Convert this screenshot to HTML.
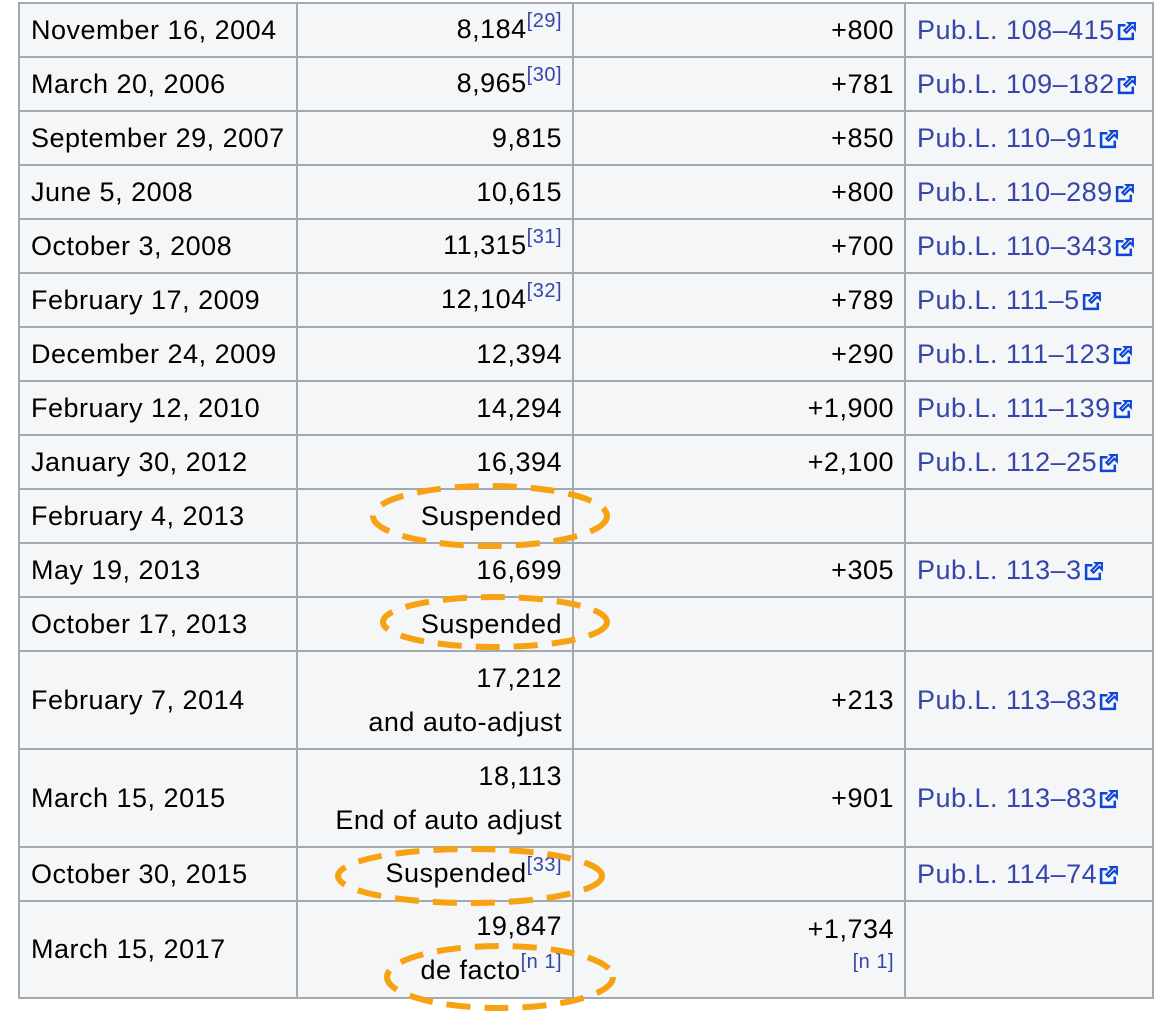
<!DOCTYPE html>
<html><head><meta charset="utf-8"><style>
body{margin:0;width:1168px;height:1018px;background:#fff;position:relative;overflow:hidden;font-family:"Liberation Sans",Arial,sans-serif;font-size:27px;letter-spacing:0.5px;color:#000}
.bg{position:absolute;left:18px;top:2px;width:1136px;height:997px;background:#f5f6f8}
.h{position:absolute;left:18px;width:1136px;height:2px;background:#a2a9b1}
.v{position:absolute;top:2px;height:997px;width:2px;background:#a2a9b1}
.row{position:absolute;left:18px;width:1136px;display:flex;align-items:center;white-space:nowrap}
.c1{width:279px;padding-left:13px;box-sizing:border-box}
.c2{width:276px;text-align:right;padding-right:11px;box-sizing:border-box;line-height:44px}
.c3{width:332px;text-align:right;padding-right:11px;box-sizing:border-box}
.c4{width:249px;padding-left:12px;box-sizing:border-box;color:#3645a8}
sup{font-size:20px;letter-spacing:0.5px;color:#3645a8;vertical-align:0;position:relative;top:-11px}
.ic{display:inline-block;width:20px;height:20px;vertical-align:-2px;margin-left:2px}
.n{font-size:20px;letter-spacing:0.5px;color:#3645a8;line-height:22px}
</style></head><body>
<div class="bg"></div>
<div class="h" style="top:2px"></div><div class="h" style="top:56px"></div><div class="h" style="top:110px"></div><div class="h" style="top:164px"></div><div class="h" style="top:218px"></div><div class="h" style="top:272px"></div><div class="h" style="top:326px"></div><div class="h" style="top:380px"></div><div class="h" style="top:434px"></div><div class="h" style="top:488px"></div><div class="h" style="top:542px"></div><div class="h" style="top:596px"></div><div class="h" style="top:650px"></div><div class="h" style="top:748px"></div><div class="h" style="top:846px"></div><div class="h" style="top:900px"></div><div class="h" style="top:997px"></div>
<div class="v" style="left:18px"></div><div class="v" style="left:296px"></div><div class="v" style="left:572px"></div><div class="v" style="left:904px"></div><div class="v" style="left:1152px"></div>
<svg width="0" height="0" style="position:absolute"><defs><symbol id="e" viewBox="0 0 19 19"><path d="M8 4H2V17H15V11" fill="none" stroke="#1046d8" stroke-width="2.4"/><path d="M11 2H17V8L14.5 5.5L9 11L7 9L12.5 3.5Z" fill="none" stroke="#1046d8" stroke-width="2"/></symbol></defs></svg>

<div class="row" style="top:4px;height:52px"><div class="c1">November 16, 2004</div><div class="c2">8,184<sup>[29]</sup></div><div class="c3">+800</div><div class="c4">Pub.L. 108–415<svg class="ic"><use href="#e"/></svg></div></div>
<div class="row" style="top:58px;height:52px"><div class="c1">March 20, 2006</div><div class="c2">8,965<sup>[30]</sup></div><div class="c3">+781</div><div class="c4">Pub.L. 109–182<svg class="ic"><use href="#e"/></svg></div></div>
<div class="row" style="top:112px;height:52px"><div class="c1">September 29, 2007</div><div class="c2">9,815</div><div class="c3">+850</div><div class="c4">Pub.L. 110–91<svg class="ic"><use href="#e"/></svg></div></div>
<div class="row" style="top:166px;height:52px"><div class="c1">June 5, 2008</div><div class="c2">10,615</div><div class="c3">+800</div><div class="c4">Pub.L. 110–289<svg class="ic"><use href="#e"/></svg></div></div>
<div class="row" style="top:220px;height:52px"><div class="c1">October 3, 2008</div><div class="c2">11,315<sup>[31]</sup></div><div class="c3">+700</div><div class="c4">Pub.L. 110–343<svg class="ic"><use href="#e"/></svg></div></div>
<div class="row" style="top:274px;height:52px"><div class="c1">February 17, 2009</div><div class="c2">12,104<sup>[32]</sup></div><div class="c3">+789</div><div class="c4">Pub.L. 111–5<svg class="ic"><use href="#e"/></svg></div></div>
<div class="row" style="top:328px;height:52px"><div class="c1">December 24, 2009</div><div class="c2">12,394</div><div class="c3">+290</div><div class="c4">Pub.L. 111–123<svg class="ic"><use href="#e"/></svg></div></div>
<div class="row" style="top:382px;height:52px"><div class="c1">February 12, 2010</div><div class="c2">14,294</div><div class="c3">+1,900</div><div class="c4">Pub.L. 111–139<svg class="ic"><use href="#e"/></svg></div></div>
<div class="row" style="top:436px;height:52px"><div class="c1">January 30, 2012</div><div class="c2">16,394</div><div class="c3">+2,100</div><div class="c4">Pub.L. 112–25<svg class="ic"><use href="#e"/></svg></div></div>
<div class="row" style="top:490px;height:52px"><div class="c1">February 4, 2013</div><div class="c2">Suspended</div><div class="c3"></div><div class="c4"></div></div>
<div class="row" style="top:544px;height:52px"><div class="c1">May 19, 2013</div><div class="c2">16,699</div><div class="c3">+305</div><div class="c4">Pub.L. 113–3<svg class="ic"><use href="#e"/></svg></div></div>
<div class="row" style="top:598px;height:52px"><div class="c1">October 17, 2013</div><div class="c2">Suspended</div><div class="c3"></div><div class="c4"></div></div>
<div class="row" style="top:652px;height:96px"><div class="c1">February 7, 2014</div><div class="c2">17,212<br>and auto-adjust</div><div class="c3">+213</div><div class="c4">Pub.L. 113–83<svg class="ic"><use href="#e"/></svg></div></div>
<div class="row" style="top:750px;height:96px"><div class="c1">March 15, 2015</div><div class="c2">18,113<br>End of auto adjust</div><div class="c3">+901</div><div class="c4">Pub.L. 113–83<svg class="ic"><use href="#e"/></svg></div></div>
<div class="row" style="top:848px;height:52px"><div class="c1">October 30, 2015</div><div class="c2">Suspended<sup>[33]</sup></div><div class="c3"></div><div class="c4">Pub.L. 114–74<svg class="ic"><use href="#e"/></svg></div></div>
<div class="row" style="top:902px;height:95px"><div class="c1">March 15, 2017</div><div class="c2">19,847<br>de facto<sup>[n 1]</sup></div><div class="c3"><div style="line-height:44px;margin-top:-20px">+1,734</div><div class="n">[n 1]</div></div><div class="c4"></div></div>

<svg style="position:absolute;left:0;top:0" width="1168" height="1018" fill="none" stroke="#f7a213" stroke-width="6" stroke-dasharray="24 14" stroke-linecap="butt">
<ellipse cx="490" cy="516" rx="117" ry="30"/>
<ellipse cx="495" cy="622" rx="112" ry="25"/>
<ellipse cx="470" cy="876" rx="132" ry="27"/>
<ellipse cx="500" cy="977" rx="113" ry="31"/>
</svg>
</body></html>
